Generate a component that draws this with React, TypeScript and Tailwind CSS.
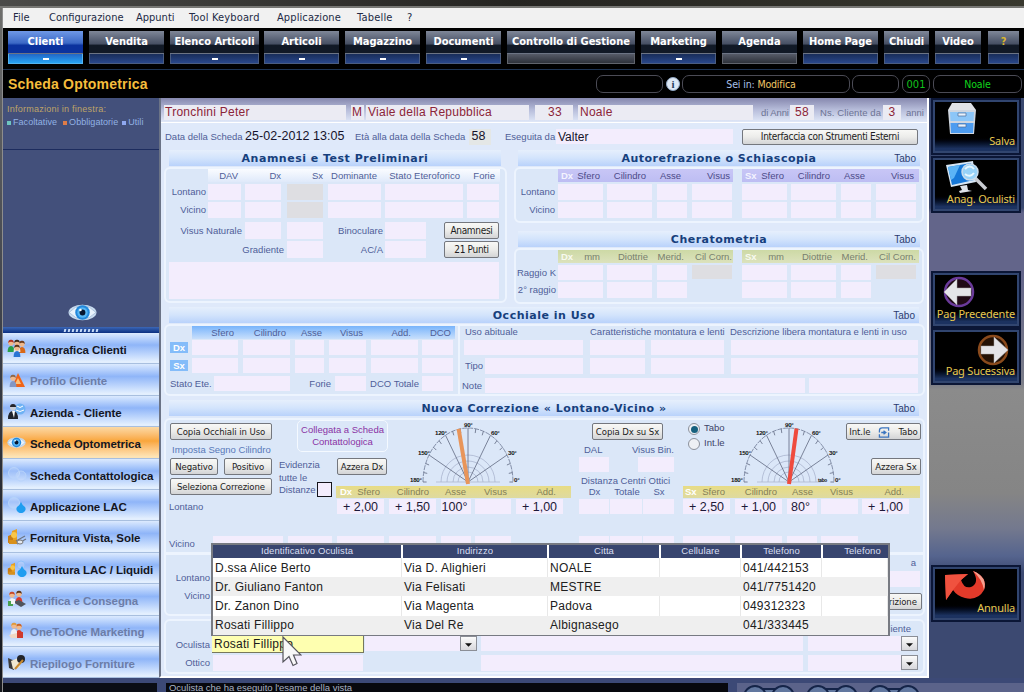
import React from "react";

type P = { c?: string; children?: React.ReactNode };

const Row = ({ c = "", children }: P) => <div className={`flex shrink-0 ${c}`}>{children}</div>;
const F = ({ c = "" }: P) => <div className={`h-full shrink-0 bg-[#f3edfd] ${c}`} />;
const G = ({ c = "" }: P) => <div className={`h-full shrink-0 bg-[#dedee2] ${c}`} />;
const L = ({ c = "", children }: P) => (
  <div className={`flex shrink-0 items-center whitespace-nowrap text-[9.5px] leading-none text-[#4f5e98] ${c}`}>{children}</div>
);
/* right aligned label */
const R = ({ c = "", children }: P) => (
  <div className={`flex shrink-0 items-center justify-end whitespace-nowrap text-[9.5px] leading-none text-[#4f5e98] ${c}`}>{children}</div>
);
const V = ({ c = "", children }: P) => (
  <div className={`flex h-full shrink-0 items-center justify-center whitespace-nowrap bg-[#f3edfd] pt-px text-[12.5px] leading-none text-[#1d1838] ${c}`}>{children}</div>
);
const Btn = ({ c = "", children }: P) => (
  <div className={`flex shrink-0 items-center justify-center whitespace-nowrap rounded-[2px] border border-[#74777e] bg-gradient-to-b from-[#f8f8f6] via-[#ececea] to-[#d3d4d6] pt-px font-['DejaVu_Sans_Condensed','DejaVu_Sans',sans-serif] text-[9.5px] leading-none tracking-[-0.08px] text-[#1c1c22] ${c}`}>{children}</div>
);
const Box = ({ c = "", children }: P) => (
  <div className={`shrink-0 rounded-[6px] border-2 border-[#edf4fe] bg-[#dbe7f8] ${c}`}>{children}</div>
);
const Title = ({ c = "", tabo = true, t }: { c?: string; tabo?: boolean; t: string }) => (
  <div className={`grid h-[16px] shrink-0 grid-cols-[50px_1fr_50px] items-center bg-gradient-to-b from-[#e6effc] via-[#d3e4fc] to-[#b9d2fb] ${c}`}>
    <span />
    <span className="whitespace-nowrap text-center font-['DejaVu_Sans',sans-serif] text-[11px] font-bold leading-none tracking-[0.5px] text-[#173f7c]">{t}</span>
    <span className="pr-[4px] pt-[1px] text-right text-[10px] leading-none text-[#2b3c70]">{tabo ? "Tabo" : ""}</span>
  </div>
);

const nav = [
  { t: "Clienti", c: "w-[75px]", k: "a" },
  { t: "Vendita", c: "w-[75px] ml-[6px]", k: "n" },
  { t: "Elenco Articoli", c: "w-[89px] ml-[6px]", k: "d" },
  { t: "Articoli", c: "w-[75px] ml-[5px]", k: "d" },
  { t: "Magazzino", c: "w-[75px] ml-[6px]", k: "d" },
  { t: "Documenti", c: "w-[75px] ml-[6px]", k: "d" },
  { t: "Controllo di Gestione", c: "w-[128px] ml-[6px]", k: "g" },
  { t: "Marketing", c: "w-[75px] ml-[6px]", k: "d" },
  { t: "Agenda", c: "w-[75px] ml-[6px]", k: "g" },
  { t: "Home Page", c: "w-[75px] ml-[6px]", k: "n" },
  { t: "Chiudi", c: "w-[45px] ml-[6px]", k: "n" },
  { t: "Video", c: "w-[46px] ml-[6px]", k: "n" },
  { t: "?", c: "w-[31px] ml-[7px]", k: "q" },
];

const Eye = ({ c = "" }: P) => (
  <svg viewBox="0 0 28 18" className={c}>
    <ellipse cx="14" cy="9" rx="13.5" ry="7.6" fill="#c9dcf0" />
    <path d="M1 9Q14-5 27 9Q14 22 1 9Z" fill="#e9f3fc" stroke="#9ab4d2" strokeWidth=".7" />
    <circle cx="14" cy="9" r="7" fill="#2288dc" />
    <circle cx="14" cy="9" r="5" fill="#57b6f4" />
    <circle cx="14" cy="9" r="2.8" fill="#061630" />
    <circle cx="12" cy="6.5" r="1.2" fill="#fff" />
  </svg>
);

const Person = ({ x, y, h, b }: { x: number; y: number; h: string; b: string }) => (
  <g>
    <path d={`M${x - 3.4} ${y + 9}Q${x - 3.4} ${y + 3} ${x} ${y + 3}Q${x + 3.4} ${y + 3} ${x + 3.4} ${y + 9}Z`} fill={b} />
    <circle cx={x} cy={y} r="2.7" fill="#f0b98c" />
    <path d={`M${x - 2.8} ${y}Q${x - 2.6} ${y - 3.4} ${x} ${y - 3.2}Q${x + 2.6} ${y - 3.4} ${x + 2.8} ${y}Q${x} ${y - 2.4} ${x - 2.8} ${y}Z`} fill={h} />
  </g>
);

const Drop = ({ x, y }: { x: number; y: number }) => (
  <path d={`M${x} ${y}Q${x + 1} ${y + 3} ${x + 4} ${y + 5}A4.6 4 0 1 1 ${x - 4} ${y + 5}Q${x - 1} ${y + 3} ${x} ${y}Z`} fill="#1f9df0" />
);
const Gold = () => (
  <g>
    <path d="M5 3L10 1V12L5 14Z" fill="#e8a020" />
    <path d="M1 8L6 6V14L1 15Z" fill="#c87c14" />
    <circle cx="7" cy="7" r="3" fill="#f8c64a" />
    <path d="M2 12h8v4H2z" fill="#d8901c" />
  </g>
);

const icons: React.ReactNode[] = [
  <g key="0"><Person x={4} y={4} h="#b03020" b="#28a048" /><Person x={15} y={5} h="#6b3a1c" b="#d86818" /><Person x={10} y={4} h="#3a2718" b="#e8e8ee" /><Person x={10} y={9} h="#5a3418" b="#2a74d4" /></g>,
  <g key="1"><path d="M11 2L18 16H5Z" fill="#f06418" /><path d="M11 7L14 13H8Z" fill="#fbc07a" /><Person x={6} y={7} h="#8d6648" b="#8296c4" /></g>,
  <g key="2"><circle cx="13" cy="7" r="5.5" fill="#6fb2f4" /><path d="M10 4q3 3 6 0M9 8q4 3 8 0" stroke="#fff" fill="none" /><path d="M1 17Q1 9 6 9Q11 9 11 17Z" fill="#20242e" /><path d="M5 9h3l-1 7z" fill="#fff" /><circle cx="6" cy="5.5" r="3" fill="#c9cdd6" /><path d="M3 5Q3 2 6 2Q9 2 9 5Z" fill="#23242a" /></g>,
  null,
  <g key="4" fill="#ffffff22" stroke="#b9d4fb" strokeWidth="1"><circle cx="7" cy="8" r="5.5" /><circle cx="14" cy="11" r="5" /></g>,
  <g key="5"><circle cx="7" cy="7" r="5.5" fill="#ffffff33" stroke="#b5d4fb" /><Drop x={14} y={6} /></g>,
  <g key="6"><Gold /><path d="M9 13L18 8M10 16L19 11" stroke="#6b7484" strokeWidth="1.2" /><ellipse cx="13" cy="14" rx="3" ry="2" fill="#e4e8f0" stroke="#777" /></g>,
  <g key="7"><g transform="translate(0 3) scale(.8)"><Gold /></g><circle cx="14" cy="6" r="4" fill="#ffffff33" stroke="#8fc0fa" /><Drop x={15} y={7} /></g>,
  <g key="8"><Person x={5} y={5} h="#c84828" b="#e8ecf4" /><Person x={12} y={4} h="#5a3418" b="#d83828" /><path d="M1 11h5v5H1z" fill="#48a050" /><path d="M6 12l8 5 5-3-7-4z" fill="#50545c" /><path d="M4 9h4v5H4z" fill="#f4f4f8" /></g>,
  <g key="9"><Person x={12} y={5} h="#c8642c" b="#d83828" /><Person x={7} y={4} h="#e09a3c" b="#f0f0f4" /><path d="M10 10h6v6h-6z" fill="#cf3a2e" /><path d="M2 13l8-2v5H4z" fill="#f0d8c4" /></g>,
  <g key="10"><path d="M1 5L8 8L7 17L2 15Z" fill="#3a3a3a" /><path d="M4 8L11 5L13 14L6 16Z" fill="#f0e8d0" /><circle cx="14" cy="6" r="4" fill="#22242a" /><path d="M8 16l8-9" stroke="#c88a30" strokeWidth="2" /></g>,
];

const side: [string, boolean][] = [
  ["Anagrafica Clienti", true],
  ["Profilo Cliente", false],
  ["Azienda - Cliente", true],
  ["Scheda Optometrica", true],
  ["Scheda Contattologica", true],
  ["Applicazione LAC", true],
  ["Fornitura Vista, Sole", true],
  ["Fornitura LAC / Liquidi", true],
  ["Verifica e Consegna", false],
  ["OneToOne Marketing", false],
  ["Riepilogo Forniture", false],
];

const ticks = Array.from({ length: 19 }, (_, i) => i * 10);
const Dial = ({ angle, color, tabo = false }: { angle: number; color: string; tabo?: boolean }) => {
  const rad = (a: number) => (a * Math.PI) / 180;
  return (
    <svg viewBox="0 0 108 66" className="h-[66px] w-[108px] shrink-0 overflow-visible">
      <path d="M7 62A45 54 0 0 1 97 62" fill="none" stroke="#6d7894" strokeWidth=".8" strokeDasharray="5 1" />
      {[10, 15, 21, 27].map((r) => (
        <path key={r} d={`M${52 - r} 62A${r} ${r} 0 0 1 ${52 + r} 62`} fill="none" stroke="#a4aec8" strokeWidth=".7" />
      ))}
      <path d="M20 62H84" stroke="#a9b3ca" strokeWidth=".7" />
      {ticks.map((a) => {
        const co = Math.cos(rad(a));
        const si = Math.sin(rad(a));
        const inner = a % 30 === 0 && a > 0 && a < 180 ? 0 : 0.92;
        return <line key={a} x1={52 + 45 * co} y1={62 - 54 * si} x2={52 + 45 * inner * co} y2={62 - 54 * inner * si} stroke="#5f6880" strokeWidth=".8" />;
      })}
      <line x1="52" y1="64" x2={52 + 54 * Math.cos(rad(angle))} y2={62 - 54 * Math.sin(rad(angle))} stroke={color} strokeWidth="4" />
      <g fontFamily="Liberation Sans, sans-serif" fontSize="6.2" fontWeight="bold" fill="#111" letterSpacing="-.3">
        <text x="48" y="7">90°</text>
        <text x="19" y="15">120°</text>
        <text x="75" y="15">60°</text>
        <text x="2" y="35">150°</text>
        <text x="92" y="35">30°</text>
        <text x="-6" y="62">180°</text>
        {tabo && <text x="81" y="62" fontSize="4.8">tabo</text>}
        <text x="98" y="62">0°</text>
      </g>
    </svg>
  );
};

const Arrow = ({ c = "" }: P) => (
  <div className={`flex shrink-0 items-end justify-center border border-[#8b8e96] bg-gradient-to-b from-[#fbfbfb] to-[#d8d8dc] pb-[3px] ${c}`}>
    <svg viewBox="0 0 8 4" className="h-[4px] w-[7px]"><path d="M0 0H8L4 4Z" fill="#111" /></svg>
  </div>
);

const Tool = ({ c = "", t, children, a = "" }: P & { t: string; a?: string }) => (
  <div className={`flex h-[57px] w-[90px] shrink-0 flex-col border-2 border-[#0b1636] bg-[#31456f] p-[2px] ${c}`}>
    <div className="flex flex-1 flex-col bg-gradient-to-b from-black from-70% to-[#1c3260] to-95%">
      <div className={`flex h-[35px] ${a}`}>{children}</div>
      <div className="-mt-[3px] mr-[2px] flex justify-end whitespace-nowrap font-['Noto_Sans',sans-serif] text-[11px] leading-[13px] tracking-[-0.2px] text-[#e8c84e]">{t}</div>
    </div>
  </div>
);

const people = [
  ["D.ssa Alice Berto", "Via D. Alighieri", "NOALE", "", "041/442153", ""],
  ["Dr. Giuliano Fanton", "Via Felisati", "MESTRE", "", "041/7751420", ""],
  ["Dr. Zanon Dino", "Via Magenta", "Padova", "", "049312323", ""],
  ["Rosati Fillippo", "Via Del Re", "Albignasego", "", "041/333445", ""],
];

const MeasureFields = ({ c = "", last = true, row }: P & { last?: boolean; row?: "grey" }) => (
  <Row c={c}>
    <F c="w-[45px]" /><F c="ml-[4px] w-[45px]" /><F c="ml-[5px] w-[30px]" />
    {row === "grey" ? <G c="ml-[5px] h-[14px]! w-[40px]" /> : last ? <F c="ml-[5px] w-[40px]" /> : <div className="ml-[5px] w-[40px]" />}
  </Row>
);

export default function App() {
  return (
    <div className="relative flex h-[692px] w-[1024px] flex-col overflow-hidden bg-[#3c4971] font-['Liberation_Sans',sans-serif]">
      <div className="h-[8px] shrink-0 border-b-2 border-[#777774] bg-gradient-to-r from-[#4b4b49] via-[#252421] to-[#38382e]" />
      <div className="flex h-[684px] shrink-0">
        <div className="w-[3px] shrink-0 border-r border-[#8d8d8d] bg-gradient-to-b from-[#6e6e6c] via-[#3a3e48] to-[#15171c]" />
        <div className="flex w-[1021px] shrink-0 flex-col">
          {/* menu bar */}
          <div className="flex h-[20px] shrink-0 items-center whitespace-nowrap bg-[#f1f1f1] pb-[2px] font-['DejaVu_Sans_Condensed','DejaVu_Sans',sans-serif] text-[11px] leading-none tracking-[0px] text-[#222a45]">
            <span className="ml-[10px] w-[36px]">File</span><span className="w-[87px]">Configurazione</span><span className="w-[53px]">Appunti</span>
            <span className="w-[88px] tracking-[0.15px]">Tool Keyboard</span><span className="w-[80px] tracking-[0.1px]">Applicazione</span><span className="w-[50px] tracking-[0.2px]">Tabelle</span><span>?</span>
          </div>
          {/* navigation */}
          <div className="flex h-[42px] shrink-0 border-b border-[#1d3353] bg-black pl-[5px] pt-[3px]">
            {nav.map((n) => (
              <div key={n.t} className={`flex h-[33px] shrink-0 flex-col ${n.c}`}>
                <div className={`flex h-[23px] justify-center whitespace-nowrap border-b border-[#6c7484] pt-[4px] font-['DejaVu_Sans_Condensed','DejaVu_Sans',sans-serif] text-[11px] font-bold leading-[13px] tracking-[0px] ${n.k === "a" ? "bg-gradient-to-b from-[#6f98e6] from-0% via-[#3c69c6] via-55% to-[#0b329e] to-65%" : "bg-gradient-to-b from-[#7f8798] from-0% via-[#475064] via-58% to-[#111926] to-66%"} ${n.k === "q" ? "text-[#d9b530]" : "text-white"}`}>{n.t}</div>
                <div className={`flex flex-1 items-center justify-center border border-t-0 ${n.k === "a" ? "border-[#54b4f0] bg-gradient-to-b from-[#2266c6] to-[#27a4f5]" : n.k === "g" ? "border-[#60646c] bg-gradient-to-b from-[#565b68] to-[#2e323b]" : "border-[#4a5c80] bg-gradient-to-b from-[#182d5a] to-[#29478a]"}`}>
                  {(n.k === "a" || n.k === "d") && <div className="h-[2px] w-[6px] bg-white" />}
                </div>
              </div>
            ))}
          </div>
          {/* page title and status */}
          <div className="flex h-[28px] shrink-0 items-center bg-black font-['DejaVu_Sans_Condensed','DejaVu_Sans',sans-serif] text-[10.5px] leading-none tracking-[-0.15px]">
            <div className="w-[593px] pl-[5px] font-['Liberation_Sans',sans-serif] text-[14px] font-bold tracking-[0.2px] text-[#f5bd3c]">Scheda Optometrica</div>
            <div className="h-[18px] w-[67px] rounded-[7px] border border-[#4b4b55]" />
            <div className="ml-[3px] flex h-[14px] w-[14px] items-center justify-center rounded-full border border-[#8fa6c4] bg-[#dde8f5] font-['Liberation_Serif',serif] text-[11px] font-bold text-[#28405f]">i</div>
            <div className="ml-[2px] flex h-[18px] w-[168px] items-center justify-center rounded-[7px] border border-[#4b4b55] pr-[10px] text-[#a9c0ea]"><span>Sei in: <span className="text-[#f0c766]">Modifica</span></span></div>
            <div className="ml-[2px] h-[18px] w-[47px] rounded-[7px] border border-[#4b4b55]" />
            <div className="ml-[3px] flex h-[18px] w-[28px] items-center justify-center rounded-[7px] border border-[#4b4b55] text-[11px] tracking-[0px] text-[#10c21c]">001</div>
            <div className="ml-[3px] flex h-[18px] w-[89px] items-center justify-center rounded-[7px] border border-[#4b4b55] text-[#10d41c]">Noale</div>
          </div>

          {/* body */}
          <div className="flex h-[580px] shrink-0">
            {/* sidebar */}
            <div className="flex w-[156px] shrink-0 flex-col bg-[#43507b]">
              <div className="h-[52px] shrink-0 border-b border-[#1d2c5e] pl-[4px] pt-[7px] text-[9px] leading-none tracking-[0.25px] text-[#bfa468]">
                <div>Informazioni in finestra:</div>
                <div className="mt-[4px] flex items-center whitespace-nowrap text-[9px] tracking-[0.05px] text-[#92b2e4]">
                  <i className="mr-[2px] h-[4px] w-[4px] bg-[#6fc6c0]" />Facoltative
                  <i className="ml-[6px] mr-[2px] h-[4px] w-[4px] bg-[#e07c48]" />Obbligatorie
                  <i className="ml-[4px] mr-[2px] h-[4px] w-[4px] bg-[#8fa8f0]" />Utili
                </div>
              </div>
              <div className="flex h-[177px] shrink-0 items-end pb-[5px] pl-[65px]"><Eye c="h-[19px] w-[29px]" /></div>
              <div className="flex h-[6px] shrink-0 items-center justify-center gap-[2px] bg-gradient-to-b from-[#3c68b8] to-[#0b2f80]">
                {ticks.slice(0, 9).map((t) => <i key={t} className="h-[3px] w-[2px] -skew-x-12 bg-[#c8dcf8]" />)}
              </div>
              {side.map(([t, on], i) => (
                <div key={t} className={`flex h-[31.4px] shrink-0 items-center whitespace-nowrap border-b border-[#a8bfdf] pl-[4px] text-[11.5px] font-bold leading-none tracking-[-0.06px] ${i === 3 ? "bg-gradient-to-b from-[#fbd9a4] from-0% via-[#f9a63a] via-45% to-[#fde3b4] to-95%" : "bg-gradient-to-b from-[#dceafe] from-0% via-[#8fb5f8] via-40% to-[#e3effe] to-95%"}`}>
                  {i === 3 ? <Eye c="h-[15px] w-[19px]" /> : <svg viewBox="0 0 20 18" className="h-[18px] w-[20px] shrink-0">{icons[i]}</svg>}
                  <span className={`pt-[5px] ${i === 3 ? "ml-[4px]" : "ml-[3px]"} ${on ? "text-[#14161f]" : "text-[#6c7da8]"}`}>{t}</span>
                </div>
              ))}
            </div>

            {/* form */}
            <div className="flex h-[580px] w-[770px] shrink-0 flex-col border-b-2 border-l-2 border-r-2 border-b-white border-l-[#6b7386] border-r-white bg-[#dfe9fa]">
              <div className="flex h-[24px] shrink-0 bg-gradient-to-b from-[#8688ae] via-[#b8bedb] to-[#e0e8f8] pb-[2px] pl-[3px] pt-[7px] text-[12px] leading-[15px] tracking-[0.25px] text-[#8c2438]">
                <div className="w-[182px] bg-[#ebebf3] pl-px">Tronchini Peter</div>
                <div className="ml-[5px] w-[13px] bg-[#ebebf3] pl-[1px]">M</div>
                <div className="ml-[2px] w-[163px] bg-[#ebebf3] pl-[2px]">Viale della Repubblica</div>
                <div className="ml-[6px] w-[38px] bg-[#ebebf3] pl-[2px] text-center">33</div>
                <div className="ml-[5px] w-[175px] bg-[#ebebf3] pl-[2px]">Noale</div>
                <L c="ml-[8px] w-[29px] tracking-[-0.1px] text-[#6c7394]!">di Anni</L>
                <div className="w-[24px] bg-[#ebebf3] text-center">58</div>
                <L c="ml-[6px] w-[63px] text-[#6c7394]! tracking-[0.1px]">Ns. Cliente da</L>
                <div className="w-[18px] bg-[#ebebf3] text-center">3</div>
                <L c="ml-[5px] tracking-[0px] text-[#6c7394]!">anni</L>
              </div>
              <div className="flex h-[27px] shrink-0 items-center border-t border-white pl-[4px] pt-px text-[12.5px] leading-none text-[#16132a]">
                <L c="w-[80px]">Data della Scheda</L><span className="w-[110px] whitespace-nowrap tracking-[0.05px]">25-02-2012 13:05</span>
                <L c="w-[114px]">Età alla data della Scheda</L><span className="flex h-[16px] w-[22px] items-center justify-center bg-[#e4e7e6] pr-[3px]">58</span>
                <L c="ml-[14px] w-[51px]">Eseguita da</L><span className="flex h-[15px] w-[177px] items-center bg-[#f3edfd] pl-[2px] text-[12px]">Valter</span>
                <Btn c="ml-[9px] h-[16px] w-[176px] text-[10px]! tracking-[-0.3px]!">Interfaccia con Strumenti Esterni</Btn>
              </div>

              {/* upper half */}
              <div className="flex h-[158px] shrink-0 pl-[3px] pt-[1px]">
                <div className="w-[344px] shrink-0">
                  <Title c="ml-[5px] w-[332px]" t="Anamnesi e Test Preliminari" tabo={false} />
                  <Box c="mt-[1px] h-[136px] w-[343px]">
                    <Row c="ml-[42px] h-[13px] w-[292px] bg-gradient-to-b from-[#fafcff] to-[#dfe9fa]">
                      <R c="w-[30px]">DAV</R><R c="w-[43px]">Dx</R><R c="w-[42px]">Sx</R><R c="w-[54px]">Dominante</R><R c="w-[83px]">Stato Eteroforico</R><R c="w-[35px]">Forie</R>
                    </Row>
                    {["Lontano", "Vicino"].map((t) => (
                      <Row key={t} c="mt-[2px] h-[16px]"><R c="w-[40px]">{t}</R><F c="ml-[2px] w-[33px]" /><F c="ml-[4px] w-[36px]" /><G c="ml-[6px] w-[36px]" /><F c="ml-[5px] w-[53px]" /><F c="ml-[4px] w-[78px]" /><F c="ml-[4px] w-[32px]" /></Row>
                    ))}
                    <Row c="mt-[4px] h-[17px]"><R c="w-[76px]">Visus Naturale</R><F c="ml-[3px] w-[36px]" /><F c="ml-[6px] w-[36px]" /><R c="w-[60px]">Binoculare</R><F c="ml-[2px] w-[41px]" /><Btn c="ml-[18px] h-[17px] w-[55px] text-[10px]! tracking-[-0.3px]!">Anamnesi</Btn></Row>
                    <Row c="mt-[2px] h-[17px]"><R c="w-[118px]">Gradiente</R><F c="ml-[3px] w-[36px]" /><R c="w-[60px]">AC/A</R><F c="ml-[2px] w-[41px]" /><Btn c="ml-[18px] h-[17px] w-[55px] text-[10px]! tracking-[-0.3px]!">21 Punti</Btn></Row>
                    <Row c="ml-[3px] mt-[4px] h-[37px]"><F c="w-[330px]" /></Row>
                  </Box>
                </div>
                <div className="ml-[6px] w-[411px] shrink-0">
                  <Title c="ml-[4px] w-[402px]" t="Autorefrazione o Schiascopia" />
                  <Box c="mt-[1px] h-[56px] w-[410px]">
                    <Row c="h-[13px]">
                      {[0, 1].map((s) => (
                        <Row key={s} c={`bg-gradient-to-b from-[#c8c6f6] to-[#bdbdf3] ${s ? "ml-[9px] w-[177px]" : "ml-[42px] w-[175px]"}`}>
                          <L c="w-[13px] pl-[3px] font-bold text-[#f4f4ff]!">{s ? "Sx" : "Dx"}</L><R c="w-[29px] text-[#4c4a88]!">Sfero</R><R c="w-[46px] text-[#4c4a88]!">Cilindro</R><R c="w-[35px] text-[#4c4a88]!">Asse</R><R c="w-[49px] text-[#4c4a88]!">Visus</R>
                        </Row>
                      ))}
                    </Row>
                    {["Lontano", "Vicino"].map((t) => (
                      <Row key={t} c="mt-[2px] h-[16px]"><R c="w-[39px]">{t}</R><MeasureFields c="ml-[3px] w-[174px]" /><MeasureFields c="ml-[10px]" /></Row>
                    ))}
                  </Box>
                  <Title c="ml-[4px] mt-[8px] w-[402px]" t="Cheratometria" />
                  <Box c="mt-[1px] h-[56px] w-[410px]">
                    <Row c="h-[13px]">
                      {[0, 1].map((s) => (
                        <Row key={s} c={`bg-gradient-to-b from-[#cdd9a5] to-[#dce2bd] ${s ? "ml-[9px] w-[177px]" : "ml-[42px] w-[175px]"}`}>
                          <L c="w-[13px] pl-[3px] font-bold text-[#f8faf0]!">{s ? "Sx" : "Dx"}</L><R c="w-[29px] text-[#78806e]!">mm</R><R c="w-[48px] text-[#78806e]!">Diottrie</R><R c="w-[36px] text-[#78806e]!">Merid.</R><R c="w-[48px] text-[#78806e]!">Cil Corn.</R>
                        </Row>
                      ))}
                    </Row>
                    <Row c="mt-[2px] h-[15px]"><R c="w-[40px]">Raggio K</R><MeasureFields c="ml-[2px] w-[174px]" row="grey" /><MeasureFields c="ml-[10px]" row="grey" /></Row>
                    <Row c="mt-[2px] h-[16px]"><R c="w-[40px]">2° raggio</R><MeasureFields c="ml-[2px] w-[174px]" last={false} /><MeasureFields c="ml-[10px]" last={false} /></Row>
                  </Box>
                </div>
              </div>

              {/* glasses in use */}
              <Title c="ml-[8px] w-[750px]" t="Occhiale in Uso" />
              <Box c="ml-[3px] mt-[1px] h-[72px] w-[761px]">
                <Row c="h-full">
                  <div className="w-[294px] border-r-2 border-[#edf4fe]">
                    <Row c="ml-[26px] h-[13px] w-[263px] bg-gradient-to-b from-[#78b4fb] to-[#c8dffb]">
                      <R c="w-[42px]">Sfero</R><R c="w-[52px]">Cilindro</R><R c="w-[36px]">Asse</R><R c="w-[41px]">Visus</R><R c="w-[48px]">Add.</R><R c="w-[40px]">DCO</R>
                    </Row>
                    {["Dx", "Sx"].map((t) => (
                      <Row key={t} c="mb-[3px] mt-[1px] h-[15px] items-center">
                        <L c="ml-[4px] h-[11px] w-[18px] justify-center bg-[#84bcf9] font-bold text-white!">{t}</L>
                        <F c="ml-[4px] w-[46px]" /><F c="ml-[5px] w-[47px]" /><F c="ml-[5px] w-[29px]" /><F c="ml-[5px] w-[37px]" /><F c="ml-[5px] w-[47px]" /><F c="ml-[4px] w-[31px]" />
                      </Row>
                    ))}
                    <Row c="h-[15px]"><L c="ml-[4px] w-[44px]">Stato Ete.</L><F c="w-[76px]" /><R c="w-[41px]">Forie</R><F c="ml-[4px] w-[31px]" /><R c="w-[53px]">DCO Totale</R><F c="ml-[3px] w-[31px]" /></Row>
                  </div>
                  <div className="flex-1">
                    <Row c="h-[14px] pb-[2px]"><L c="ml-[5px] w-[125px]">Uso abituale</L><L c="w-[140px]">Caratteristiche montatura e lenti</L><L c="tracking-[0px]">Descrizione libera montatura e lenti in uso</L></Row>
                    <Row c="h-[15px]"><F c="ml-[4px] w-[119px]" /><F c="ml-[7px] w-[55px]" /><F c="ml-[6px] w-[73px]" /><F c="ml-[7px] w-[187px]" /></Row>
                    <Row c="mt-[3px] h-[16px]"><L c="ml-[5px] w-[20px]">Tipo</L><F c="w-[98px]" /><F c="ml-[7px] w-[55px]" /><F c="ml-[6px] w-[73px]" /><F c="ml-[7px] w-[187px]" /></Row>
                    <Row c="mt-[4px] h-[15px]"><L c="ml-[2px] w-[23px]">Note</L><F c="w-[320px]" /><F c="ml-[4px] w-[109px]" /></Row>
                  </div>
                </Row>
              </Box>

              {/* new correction */}
              <Title c="ml-[8px] mt-[4px] w-[750px]" t="Nuova Correzione « Lontano-Vicino »" />
              <Box c="ml-[3px] mt-[2px] h-[136px] w-[761px] rounded-b-none!">
                <Row c="h-[96px]">
                  <div className="w-[110px] shrink-0 pl-[4px] pt-[3px]">
                    <Btn c="h-[17px] w-[102px]">Copia Occhiali in Uso</Btn>
                    <L c="h-[18px] pl-[2px] pt-[2px] text-[#5878b8]!">Imposta Segno Cilindro</L>
                    <Row c="gap-[6px]"><Btn c="h-[17px] w-[48px]">Negativo</Btn><Btn c="h-[17px] w-[48px]">Positivo</Btn></Row>
                    <Btn c="mt-[3px] h-[17px] w-[102px]">Seleziona Correzione</Btn>
                    <L c="-ml-[1px] mt-[4px] h-[15px]">Lontano</L>
                  </div>
                  <div className="w-[300px] shrink-0">
                    <Row c="h-[66px]">
                      <div className="w-[140px] shrink-0">
                        <div className="ml-[21px] flex h-[32px] w-[91px] flex-col justify-center whitespace-nowrap rounded-[5px] border border-[#f4f9ff] text-center text-[9.5px] leading-[12px] text-[#8a32a4]"><span>Collegata a Scheda</span><span>Contattologica</span></div>
                        <Row c="mt-[5px]">
                          <L c="ml-[3px] h-[41px] w-[38px] items-start! whitespace-pre! pt-[2px] leading-[12.5px]! tracking-[-0.05px]">{"Evidenzia\ntutte le\nDistanze"}</L>
                          <div className="mt-[25px] h-[15px] w-[15px] shrink-0 border border-[#15151c] bg-[#f3edfd]" />
                          <Btn c="ml-[5px] mt-[1px] h-[17px] w-[50px]">Azzera Dx</Btn>
                        </Row>
                      </div>
                      <div className="shrink-0"><Dial angle={100} color="#e8955a" /></div>
                    </Row>
                    <Row c="ml-[60px] h-[12px] w-[235px] bg-gradient-to-b from-[#e8dc84] to-[#dedaa0]">
                      <L c="w-[16px] pl-[4px] font-bold text-white!">Dx</L><R c="w-[28px] text-[#847f58]!">Sfero</R><R c="w-[49px] text-[#847f58]!">Cilindro</R><R c="w-[37px] text-[#847f58]!">Asse</R><R c="w-[41px] text-[#847f58]!">Visus</R><R c="w-[49px] text-[#847f58]!">Add.</R>
                    </Row>
                    <Row c="ml-[61px] mt-[1px] h-[15px]"><V c="w-[47px]">+ 2,00</V><V c="ml-[5px] w-[47px]">+ 1,50</V><V c="ml-[5px] w-[30px] pr-[3px]">100°</V><F c="ml-[4px] w-[36px]" /><V c="ml-[5px] w-[47px]">+ 1,00</V></Row>
                  </div>
                  <div className="w-[104px] shrink-0 pl-[3px] pt-[3px]">
                    <Btn c="ml-[13px] h-[17px] w-[71px]">Copia Dx su Sx</Btn>
                    <Row c="h-[17px] w-[95px] justify-between pl-[5px] pt-[2px]"><L>DAL</L><L>Visus Bin.</L></Row>
                    <Row c="h-[15px] w-[95px] justify-between"><F c="w-[30px]" /><F c="w-[36px]" /></Row>
                    <L c="mt-[3px] h-[11px] pl-[2px]">Distanza Centri Ottici</L>
                    <Row c="h-[12px] w-[95px]"><L c="w-[31px] justify-center">Dx</L><L c="w-[34px] justify-center">Totale</L><L c="w-[30px] justify-center">Sx</L></Row>
                    <Row c="mt-[1px] h-[15px] gap-px"><F c="w-[30px]" /><F c="w-[32px]" /><F c="w-[31px]" /></Row>
                  </div>
                  <div className="w-[241px] shrink-0 pl-[3px]">
                    <Row c="h-[66px]">
                      <div className="w-[54px] shrink-0 pl-[5px] pt-[3px]">
                        {["Tabo", "Int.le"].map((t, i) => (
                          <Row key={t} c="mb-[3px] h-[12px] items-center">
                            <div className="flex h-[12px] w-[12px] items-center justify-center rounded-full border border-[#8c919c] bg-[#eef0f4]">{i === 0 && <div className="h-[7px] w-[7px] rounded-full bg-[#17607e]" />}</div>
                            <L c="-mt-[3px] ml-[4px] text-[#3d4468]!">{t}</L>
                          </Row>
                        ))}
                      </div>
                      <Dial angle={82} color="#ef4b3e" tabo />
                      <div className="flex w-[76px] shrink-0 flex-col items-end pt-[3px]">
                        <Btn c="h-[17px] w-[75px] gap-[8px]">
                          <span>Int.le</span>
                          <svg viewBox="0 0 12 12" className="h-[11px] w-[12px]" fill="none" stroke="#3c76c0" strokeWidth="1.4"><path d="M1 6V4Q1 1 4 1H11V4M1 8V11H11V6M3 6H7M5.5 4L8 6L5.5 8" /></svg>
                          <span>Tabo</span>
                        </Btn>
                        <Btn c="mt-[18px] h-[17px] w-[50px]">Azzera Sx</Btn>
                      </div>
                    </Row>
                    <Row c="h-[12px] w-[237px] bg-gradient-to-b from-[#e8dc84] to-[#dedaa0]">
                      <L c="w-[15px] pl-[2px] font-bold text-white!">Sx</L><R c="w-[27px] text-[#847f58]!">Sfero</R><R c="w-[52px] text-[#847f58]!">Cilindro</R><R c="w-[36px] text-[#847f58]!">Asse</R><R c="w-[40px] text-[#847f58]!">Visus</R><R c="w-[51px] text-[#847f58]!">Add.</R>
                    </Row>
                    <Row c="mt-[1px] h-[15px]"><V c="w-[47px]">+ 2,50</V><V c="ml-[5px] w-[47px]">+ 1,00</V><V c="ml-[5px] w-[30px] pr-[3px]">80°</V><F c="ml-[4px] w-[37px]" /><V c="ml-[4px] w-[47px]">+ 1,00</V></Row>
                  </div>
                </Row>
                <Row c="mt-[20px] h-[15px]"><L c="ml-[3px] w-[44px]">Vicino</L><F c="w-[70px]" /><F c="ml-[5px] w-[44px]" /><F c="ml-[5px] w-[47px]" /><F c="ml-[5px] w-[47px]" /><F c="ml-[5px] w-[30px]" /><F c="ml-[4px] w-[36px]" /><F c="ml-[68px] w-[30px]" /><F c="ml-px w-[32px]" /><F c="ml-px w-[31px]" /><F c="ml-[9px] w-[47px]" /><F c="ml-[5px] w-[47px]" /><F c="ml-[5px] w-[30px]" /><F c="ml-[4px] w-[37px]" /></Row>
              </Box>
              <Box c="-mt-[1px] ml-[3px] h-[63px] w-[761px] rounded-t-none!">
                <Row c="h-full justify-between">
                  <div className="w-[44px] pt-[16px]"><R c="h-[14px]">Lontano</R><R c="mt-[4px] h-[14px]">Vicino</R></div>
                  <div className="flex w-[60px] flex-col items-end"><R c="h-[16px] pr-[7px]">a</R><Row c="h-[16px]"><F c="mr-[3px] w-[56px]" /></Row><Btn c="mr-[1px] mt-[6px] h-[17px] w-[59px]">Descrizione</Btn></div>
                </Row>
              </Box>
              <Box c="ml-[3px] mt-[3px] h-[55px] w-[761px]">
                <R c="h-[15px] pr-[12px]">Cliente</R>
                <Row c="h-[17px]"><R c="w-[44px]">Oculista</R><div className="ml-[2px] flex h-[17px] w-[152px] items-center border-b border-r border-[#77775c] bg-[#feffb0] pl-[2px] text-[12px] leading-none tracking-[0.25px] text-[#1a1a1a]">Rosati Fillippo</div><F c="ml-[1px] h-[15px]! w-[95px]" /><Arrow c="h-[15px] w-[17px]" /><F c="ml-[4px] h-[15px]! w-[322px]" /><F c="ml-[5px] h-[15px]! w-[93px]" /><Arrow c="h-[15px] w-[17px]" /></Row>
                <Row c="mt-[2px] h-[16px]"><R c="w-[44px]">Ottico</R><F c="ml-[3px] w-[150px]" /><F c="ml-[118px] w-[322px]" /><F c="ml-[5px] w-[93px]" /><Arrow c="h-[15px] w-[17px]" /></Row>
              </Box>
            </div>

            {/* tool column */}
            <div className="flex w-[95px] shrink-0 flex-col bg-[linear-gradient(to_bottom,#3a486f_0px,#3a486f_110px,#63658a_115px,#63658a_175px,#7b7d88_285px,#8b8b8b_292px,#858585_395px,#74798e_430px,#55648e_458px,#3c4971_475px)] pl-[2px]">
              <Tool t="Salva" a="pl-[12px]">
                <svg viewBox="0 0 30 33" className="h-[33px] w-[30px]"><path d="M5 1H24L29 8H1Z" fill="#e0e2e6" /><path d="M1 8H29L27 32H3Z" fill="#cfd6e0" /><path d="M3 10H27L26.5 19H3.5Z" fill="#8cc6f8" /><path d="M3.5 21H26.5L26 31H4Z" fill="#4d9cf0" /><path d="M11 11h8v3h-8zM11 22h8v3h-8z" fill="#e8f2fc" stroke="#4c6c98" strokeWidth=".7" /></svg>
              </Tool>
              <Tool c="mt-px" t="Anag. Oculisti" a="pl-[11px]">
                <svg viewBox="0 0 42 34" className="h-[34px] w-[42px]"><path d="M0 5L27 1L30 22L5 27Z" fill="#d6e6f4" /><path d="M2 7L25 3L28 20L6 25Z" fill="#1678d8" /><path d="M2 7L14 5L8 18L5 20Z" fill="#5cb4f6" /><path d="M14 26l7-1 1 5 4 1-12 2-1-2 3-1z" fill="#dde2e8" /><path d="M29 18L40 29" stroke="#c9ccd2" strokeWidth="3.5" /><circle cx="24" cy="12" r="8" fill="#98d2f8" stroke="#cadcec" strokeWidth="1.5" /><path d="M19 9q5-5 9 0M19 14q5 4 9-1" stroke="#e7f7ff" fill="none" strokeWidth="2" /></svg>
              </Tool>
              <Tool c="mt-[58px]" t="Pag Precedente" a="pl-[8px]">
                <svg viewBox="0 0 32 34" className="h-[34px] w-[32px]"><circle cx="16" cy="17" r="14" fill="#200a16" stroke="#6a3a9a" strokeWidth="2.5" /><path d="M1 17L14 4V13H28V21H14V30Z" fill="#e4e4e8" stroke="#aaa" strokeWidth=".5" /></svg>
              </Tool>
              <Tool t="Pag Sucessiva" a="pl-[42px] pt-px">
                <svg viewBox="0 0 32 34" className="h-[34px] w-[32px]"><circle cx="16" cy="17" r="14" fill="#241206" stroke="#8a4a1c" strokeWidth="2.5" /><path d="M31 17L17 4V13H4V21H17V30Z" fill="#e4e4e8" stroke="#aaa" strokeWidth=".5" /></svg>
              </Tool>
              <Tool c="mt-[180px]" t="Annulla" a="pl-[9px]">
                <svg viewBox="0 0 44 34" className="h-[34px] w-[44px]"><path d="M1 6L24 5L17 11Q20 20 27 18Q36 14 29 2Q44 8 40 21Q34 32 21 29Q13 27 9 21L2 31Z" fill="#e23a2a" /><path d="M29 2Q44 8 40 21Q38 10 29 2Z" fill="#f7a090" /><path d="M1 6L24 5L17 11L9 21L2 31Z" fill="#f0523f" /></svg>
              </Tool>
            </div>
          </div>

          {/* status line */}
          <div className="flex h-[14px] shrink-0 bg-[#3c4976] pt-[5px]">
            <div className="w-[154px] bg-[#0a0d14]" />
            <div className="ml-[9px] h-[9px] w-[562px] bg-[#07080d] pl-[3px] text-[9.5px] leading-[9px] tracking-[-0.02px] text-[#a9b3c2]">Oculista che ha eseguito l'esame della vista</div>
            <div className="ml-[9px] flex-1 bg-[#5b638a]">
              <svg viewBox="0 0 287 9" className="h-[9px] w-[287px]">{[7, 70, 132].map((x) => <g key={x} fill="#61779f" stroke="#142448" strokeWidth="2"><path d={`M${x + 10} 6H${x + 42}V12H${x + 10}Z`} /><circle cx={x + 11} cy="14" r="11" /><circle cx={x + 39} cy="14" r="11" /></g>)}</svg>
            </div>
          </div>
        </div>
      </div>

      {/* lookup list */}
      <div className="absolute left-[211px] top-[543px] h-[93px] w-[679px] border-2 border-[#777a82] bg-white">
        <div className="flex h-[13px] gap-[2px] whitespace-nowrap bg-white text-center text-[9.5px] leading-[12px] tracking-[0.1px] text-[#d8dff2]">
          <div className="w-[188px] bg-[#38456f]">Identificativo Oculista</div><div className="w-[144px] bg-[#38456f]">Indirizzo</div><div className="w-[110px] bg-[#38456f]">Citta</div><div className="w-[79px] bg-[#38456f]">Cellulare</div><div className="w-[79px] bg-[#38456f]">Telefono</div><div className="flex-1 bg-[#38456f] pl-[14px]">Telefono</div>
        </div>
        {people.map((p, i) => (
          <div key={p[0]} className={`grid h-[19.2px] grid-cols-[189px_146px_112px_81px_81px_1fr] items-center whitespace-nowrap text-[12px] leading-none tracking-[0.25px] text-[#202020] ${i % 2 ? "bg-[#efefef]" : "bg-white"}`}>
            {p.map((v, j) => <div key={j} className={`flex h-full items-center border-r pl-[2px] ${i % 2 ? "border-[#efefef]" : "border-[#e8e8e8]"}`}>{v}</div>)}
          </div>
        ))}
      </div>
      <svg viewBox="0 0 20 31" className="absolute left-[282px] top-[636px] h-[31px] w-[20px]"><path d="M1 1V26L7 20.5L11 29.5L15 27.5L11.5 19H19Z" fill="#f8f8f8" stroke="#55555c" strokeWidth="1.2" /></svg>
    </div>
  );
}
